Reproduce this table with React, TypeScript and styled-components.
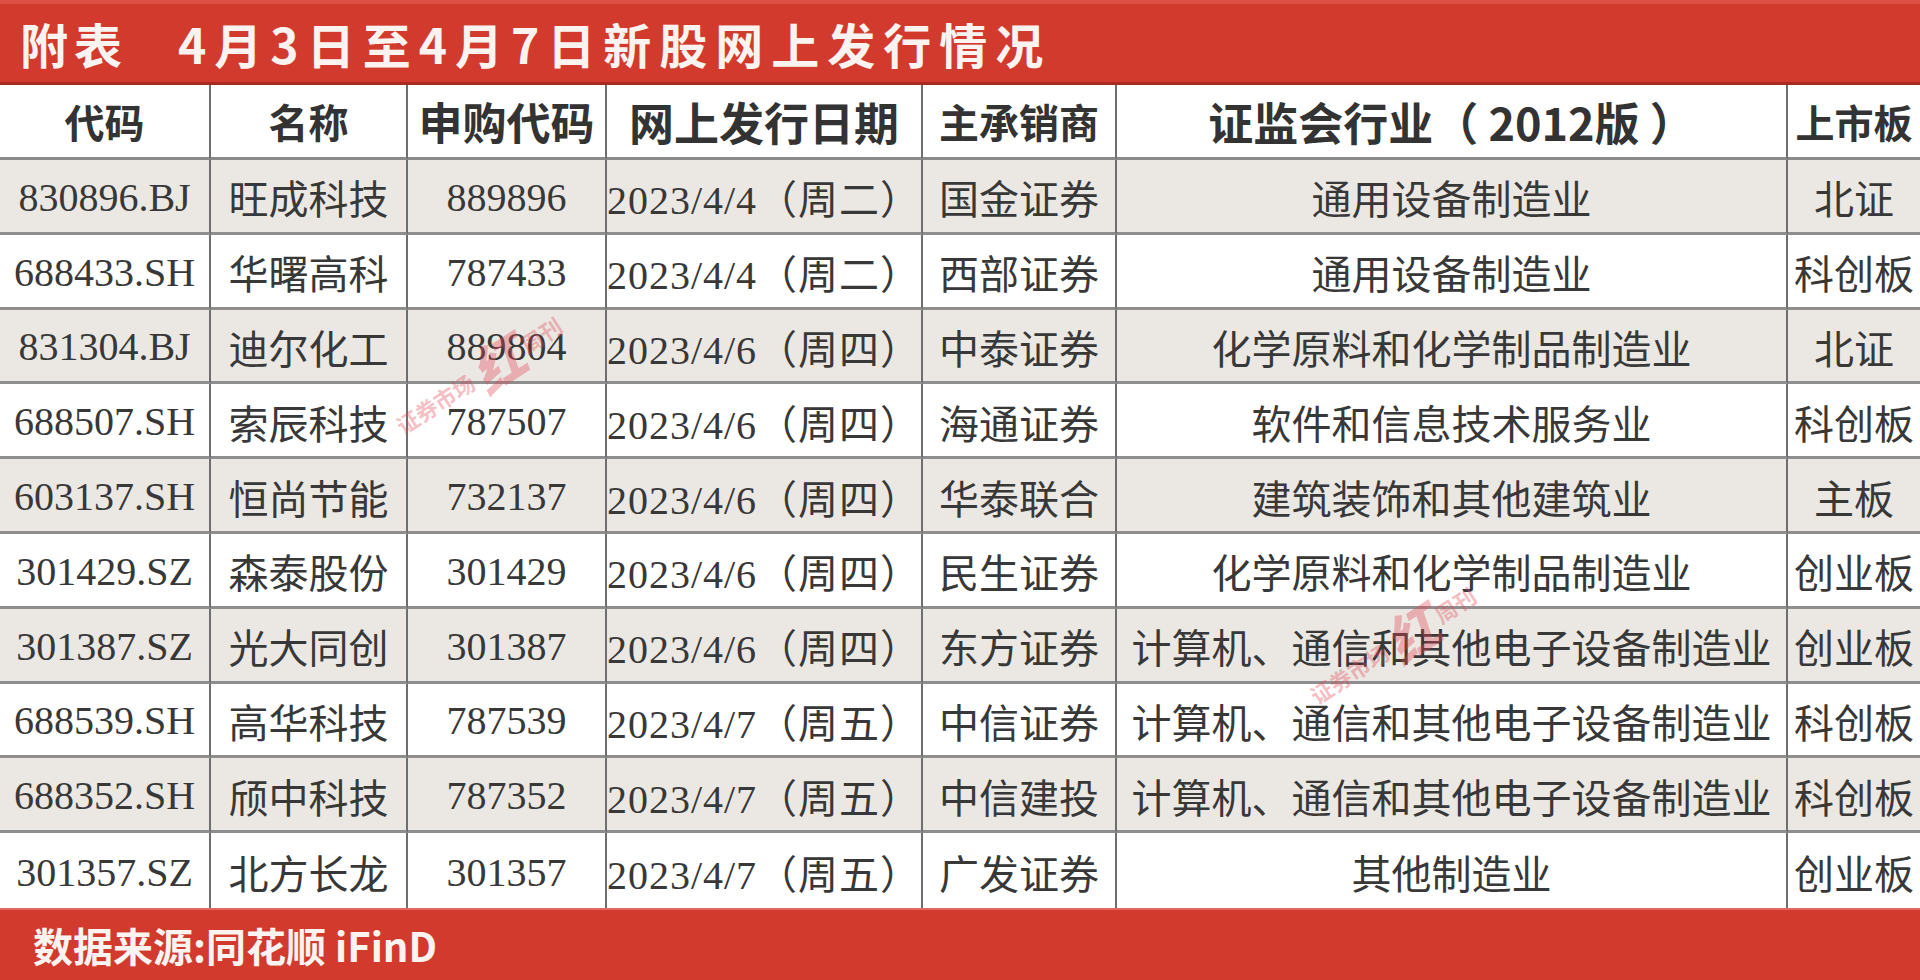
import styled, { createGlobalStyle } from 'styled-components';

const rows = [
  ['830896.BJ', '旺成科技', '889896', '2023/4/4（周二）', '国金证券', '通用设备制造业', '北证'],
  ['688433.SH', '华曙高科', '787433', '2023/4/4（周二）', '西部证券', '通用设备制造业', '科创板'],
  ['831304.BJ', '迪尔化工', '889804', '2023/4/6（周四）', '中泰证券', '化学原料和化学制品制造业', '北证'],
  ['688507.SH', '索辰科技', '787507', '2023/4/6（周四）', '海通证券', '软件和信息技术服务业', '科创板'],
  ['603137.SH', '恒尚节能', '732137', '2023/4/6（周四）', '华泰联合', '建筑装饰和其他建筑业', '主板'],
  ['301429.SZ', '森泰股份', '301429', '2023/4/6（周四）', '民生证券', '化学原料和化学制品制造业', '创业板'],
  ['301387.SZ', '光大同创', '301387', '2023/4/6（周四）', '东方证券', '计算机、通信和其他电子设备制造业', '创业板'],
  ['688539.SH', '高华科技', '787539', '2023/4/7（周五）', '中信证券', '计算机、通信和其他电子设备制造业', '科创板'],
  ['688352.SH', '颀中科技', '787352', '2023/4/7（周五）', '中信建投', '计算机、通信和其他电子设备制造业', '科创板'],
  ['301357.SZ', '北方长龙', '301357', '2023/4/7（周五）', '广发证券', '其他制造业', '创业板'],
];

const headers = [
  { label: '代码', size: 40 },
  { label: '名称', size: 40 },
  { label: '申购代码', size: 44 },
  { label: '网上发行日期', size: 45 },
  { label: '主承销商', size: 40 },
  { label: '证监会行业（ 2012版 ）', size: 45 },
  { label: '上市板', size: 39 },
];

// 水印位置（左下角，相对表格）
const stamps = [
  { x: 398, y: 342 },
  { x: 1312, y: 612 },
];

const App = () => {
  return (
    <>
      <GlobalStyle />
      <Page>
        <TitleBar>
          <TitleTag>附表</TitleTag>
          <TitleText>4月3日至4月7日新股网上发行情况</TitleText>
        </TitleBar>
        <TableWrap>
          <Table>
            {headers.map((h, i) => (
              <HeadCell key={h.label} $size={h.size} $lastCol={i === headers.length - 1}>
                {h.label}
              </HeadCell>
            ))}
            {rows.map((row, r) =>
              row.map((val, c) => (
                <Cell
                  key={r + '-' + c}
                  $shade={r % 2 === 0}
                  $lastCol={c === row.length - 1}
                  $lastRow={r === rows.length - 1}
                  $spread={c === 3}
                >
                  {val}
                </Cell>
              ))
            )}
          </Table>
          {stamps.map((s, i) => (
            <Stamp key={i} style={{ left: s.x, top: s.y - 26 }}>
              <small>证券市场</small>
              <b>红</b>
              <small>周刊</small>
            </Stamp>
          ))}
        </TableWrap>
        <Footer>数据来源:同花顺 iFinD</Footer>
      </Page>
    </>
  );
};

export default App;

const GlobalStyle = createGlobalStyle`
  html, body {
    margin: 0;
    padding: 0;
    background: #fff;
  }
  * {
    box-sizing: border-box;
  }
`;

const Page = styled.div`
  width: 1920px;
  height: 980px;
  display: flex;
  flex-direction: column;
  overflow: hidden;
`;

const TitleBar = styled.div`
  height: 85px;
  flex: none;
  display: flex;
  align-items: center;
  padding-left: 20px;
  background: #d23a2d;
  border-top: 4px solid #dc5046;
  border-bottom: 3px solid #a92a20;
  color: #fbf3f0;
  font-family: 'Noto Sans CJK SC', sans-serif;
  font-weight: 700;
  font-size: 48px;
`;

const TitleTag = styled.span`
  letter-spacing: 6px;
  margin-right: 50px;
`;

const TitleText = styled.span`
  letter-spacing: 8px;
`;

const TableWrap = styled.div`
  position: relative;
  flex: 1;
  min-height: 0;
`;

const Table = styled.div`
  height: 100%;
  display: grid;
  grid-template-columns: 211px 197px 199px 316px 194px 671px 132px;
  grid-template-rows: 75px repeat(10, 1fr);
`;

const HeadCell = styled.div<{ $size: number; $lastCol: boolean }>`
  display: flex;
  align-items: center;
  justify-content: center;
  white-space: pre;
  background: #fff;
  border-right: ${(p) => (p.$lastCol ? 'none' : '2px solid #6e6e6e')};
  border-bottom: 3px solid #8a8a8a;
  font-family: 'Noto Sans CJK SC', sans-serif;
  font-weight: 700;
  font-size: ${(p) => p.$size}px;
  color: #333;
`;

const Cell = styled.div<{ $shade: boolean; $lastCol: boolean; $lastRow: boolean; $spread: boolean }>`
  display: flex;
  align-items: center;
  justify-content: center;
  white-space: nowrap;
  overflow: hidden;
  padding-top: 3px;
  background: ${(p) => (p.$shade ? '#ebe8e4' : '#fff')};
  border-right: ${(p) => (p.$lastCol ? 'none' : '2px solid #6e6e6e')};
  border-bottom: ${(p) => (p.$lastRow ? 'none' : '3px solid #8e8e8e')};
  font-family: 'Liberation Serif', 'Noto Sans CJK SC', serif;
  font-size: 40px;
  letter-spacing: ${(p) => (p.$spread ? '1px' : '0')};
  color: #383838;
`;

const Stamp = styled.div`
  position: absolute;
  height: 52px;
  display: flex;
  align-items: center;
  gap: 4px;
  line-height: 1;
  transform: rotate(-33deg);
  transform-origin: left center;
  color: rgba(226, 70, 84, 0.36);
  font-family: 'Noto Sans CJK SC', sans-serif;
  font-weight: 700;
  pointer-events: none;
  white-space: nowrap;
  small {
    font-size: 22px;
  }
  b {
    font-size: 52px;
    font-style: italic;
  }
`;

const Footer = styled.div`
  height: 72px;
  flex: none;
  display: flex;
  align-items: center;
  padding-left: 33px;
  background: #d23a2d;
  border-top: 2px solid #e0695f;
  color: #fbf3f0;
  font-family: 'Noto Sans CJK SC', sans-serif;
  font-weight: 700;
  font-size: 40px;
`;
